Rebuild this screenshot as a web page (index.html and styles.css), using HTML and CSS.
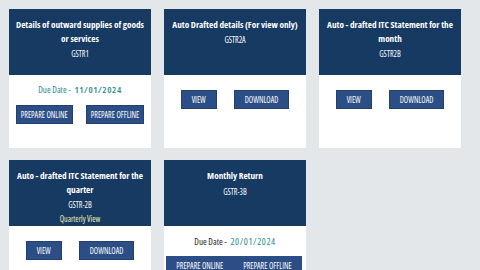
FILE: index.html
```html
<!DOCTYPE html>
<html lang="en">

<head>
    <meta charset="UTF-8">
    <meta name="viewport" content="width=device-width, initial-scale=1.0">
    <title>Returns Dashboard</title>

    <link rel="stylesheet" href="styles.css">
</head>

<body>

    <div class="returns">

        <div class="tile">
            <div class="tile-head">
                <div class="tile-title">Details of outward supplies of goods or services</div>
                <div class="tile-code">GSTR1</div>
            </div>
            <div class="tile-body tile-body-due">
                <div class="due due-teal">Due Date - <span class="due-date due-date-bold">11/01/2024</span></div>
                <div class="btn-row btn-row-tight">
                    <button class="btn btn-wide">PREPARE ONLINE</button>
                    <button class="btn btn-wide">PREPARE OFFLINE</button>
                </div>
            </div>
        </div>

        <div class="tile">
            <div class="tile-head">
                <div class="tile-title">Auto Drafted details (For view only)</div>
                <div class="tile-code">GSTR2A</div>
            </div>
            <div class="tile-body">
                <div class="btn-row">
                    <button class="btn">VIEW</button>
                    <button class="btn">DOWNLOAD</button>
                </div>
            </div>
        </div>

        <div class="tile">
            <div class="tile-head">
                <div class="tile-title">Auto - drafted ITC Statement for the month</div>
                <div class="tile-code">GSTR2B</div>
            </div>
            <div class="tile-body">
                <div class="btn-row">
                    <button class="btn">VIEW</button>
                    <button class="btn">DOWNLOAD</button>
                </div>
            </div>
        </div>

        <div class="tile">
            <div class="tile-head">
                <div class="tile-title">Auto - drafted ITC Statement for the quarter</div>
                <div class="tile-code">GSTR-2B</div>
                <div class="tile-note">Quarterly View</div>
            </div>
            <div class="tile-body">
                <div class="btn-row">
                    <button class="btn">VIEW</button>
                    <button class="btn">DOWNLOAD</button>
                </div>
            </div>
        </div>

        <div class="tile">
            <div class="tile-head">
                <div class="tile-title">Monthly Return</div>
                <div class="tile-code tile-code-low">GSTR-3B</div>
            </div>
            <div class="tile-body tile-body-due2">
                <div class="due due-tight">Due Date - <span class="due-date">20/01/2024</span></div>
                <div class="btn-row btn-row-joined">
                    <button class="btn">PREPARE ONLINE</button>
                    <button class="btn">PREPARE OFFLINE</button>
                </div>
            </div>
        </div>

    </div>

</body>

</html>
```

FILE: styles.css
```css
body {
    font-family: "Open Sans", "DejaVu Sans", sans-serif;
    font-stretch: 75%;
    background-color: #e4e7ea;
    margin: 0;
    padding: 9px;
    color: #222;
}

.returns {
    display: grid;
    grid-template-columns: repeat(3, 142px);
    column-gap: 13px;
    row-gap: 12px;
}

.tile {
    background: white;
    height: 139px;
    display: flex;
    flex-direction: column;
}

.tile-head {
    background-color: #163a62;
    color: white;
    text-align: center;
    height: 66px;
    box-sizing: border-box;
    padding: 9px 5px 0;
}

.tile-title {
    font-size: 9.2px;
    font-weight: bold;
    line-height: 14px;
}

.tile-code {
    font-size: 8px;
    line-height: 15px;
}

.tile-code-low {
    line-height: 17px;
}

.tile-note {
    font-size: 8px;
    line-height: 14px;
    color: #f2edb4;
}

.tile-body {
    padding-top: 15px;
    text-align: center;
}

.tile-body-due {
    padding-top: 8px;
}

.tile-body-due2 {
    padding-top: 9px;
}

.due {
    font-size: 9px;
    line-height: 14px;
    margin-bottom: 8px;
}

.due-tight {
    margin-bottom: 7px;
}

.due-teal {
    color: #1e8a8e;
}

.due-date {
    color: #1e8a8e;
    font-size: 9.5px;
    letter-spacing: 0.6px;
    margin-left: 2px;
}

.due-date-bold {
    font-weight: 600;
}

.btn-row {
    display: flex;
    justify-content: center;
    gap: 17px;
}

.btn-row-tight {
    gap: 13px;
}

.btn-row-joined {
    gap: 0;
    margin: 0 7px 0 5px;
}

.btn {
    font-family: inherit;
    font-stretch: 75%;
    background-color: #2c4e86;
    color: white;
    font-size: 8px;
    height: 19px;
    padding: 0 10px;
    border: 1px solid #243f6d;
    border-radius: 0;
    white-space: nowrap;
    cursor: pointer;
}

.btn-wide {
    padding: 0 4px;
    min-width: 57px;
}

.btn-row-joined .btn {
    flex: 1;
    border: none;
}

.btn:hover {
    background-color: #1f3a66;
}
```
